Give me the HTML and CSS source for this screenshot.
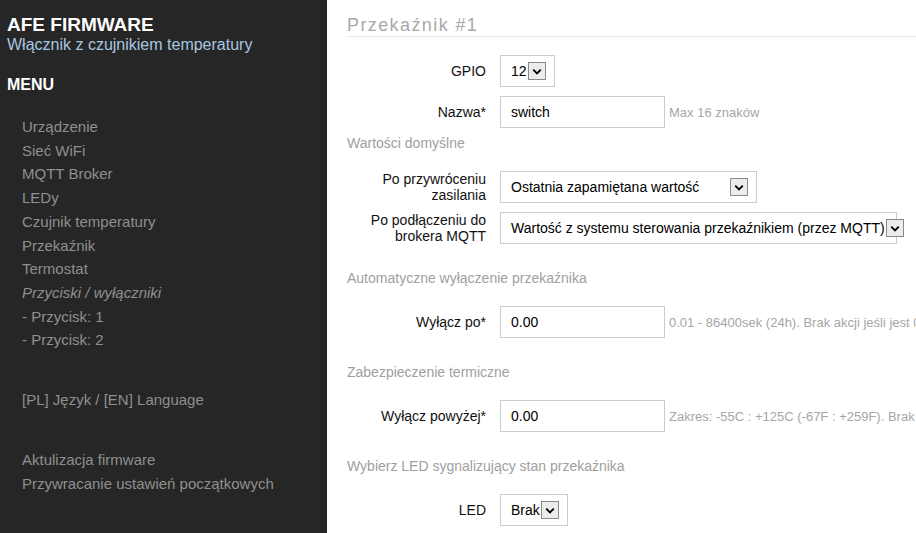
FILE: index.html
```html
<!DOCTYPE html>
<html lang="pl">
<head>
<meta charset="utf-8">
<title>AFE Firmware</title>
<link rel="stylesheet" href="styles.css">
</head>
<body>
<div class="layout">
  <nav class="sidebar">
    <div class="brand">AFE FIRMWARE</div>
    <div class="subtitle">Włącznik z czujnikiem temperatury</div>
    <div class="menu-title">MENU</div>
    <ul class="menu">
      <li>Urządzenie</li>
      <li>Sieć WiFi</li>
      <li>MQTT Broker</li>
      <li>LEDy</li>
      <li>Czujnik temperatury</li>
      <li>Przekaźnik</li>
      <li>Termostat</li>
      <li class="italic">Przyciski / wyłączniki</li>
      <li>- Przycisk: 1</li>
      <li>- Przycisk: 2</li>
      <li class="spaced">[PL] Język / [EN] Language</li>
      <li class="spaced">Aktulizacja firmware</li>
      <li>Przywracanie ustawień początkowych</li>
    </ul>
  </nav>
  <main class="content">
    <h2 class="heading">Przekaźnik #1</h2>
    <div class="row">
      <label class="lbl">GPIO</label>
      <div class="select w-gpio"><span>12</span><span class="arrow"><svg width="17" height="17" viewBox="0 0 17 17"><path d="M4.5 6.5 L8.5 10.5 L12.5 6.5" fill="none" stroke="#000" stroke-width="2"/></svg></span></div>
    </div>
    <div class="row">
      <label class="lbl">Nazwa*</label>
      <div class="input">switch</div>
      <span class="hint">Max 16 znaków</span>
    </div>
    <div class="legend first">Wartości domyślne</div>
    <div class="row">
      <label class="lbl">Po przywróceniu zasilania</label>
      <div class="select w-power"><span>Ostatnia zapamiętana wartość</span><span class="arrow"><svg width="17" height="17" viewBox="0 0 17 17"><path d="M4.5 6.5 L8.5 10.5 L12.5 6.5" fill="none" stroke="#000" stroke-width="2"/></svg></span></div>
    </div>
    <div class="row">
      <label class="lbl">Po podłączeniu do brokera MQTT</label>
      <div class="select w-mqtt"><span>Wartość z systemu sterowania przekaźnikiem (przez MQTT)</span><span class="arrow"><svg width="17" height="17" viewBox="0 0 17 17"><path d="M4.5 6.5 L8.5 10.5 L12.5 6.5" fill="none" stroke="#000" stroke-width="2"/></svg></span></div>
    </div>
    <div class="legend">Automatyczne wyłączenie przekaźnika</div>
    <div class="row">
      <label class="lbl">Wyłącz po*</label>
      <div class="input">0.00</div>
      <span class="hint">0.01 - 86400sek (24h). Brak akcji jeśli jest 0</span>
    </div>
    <div class="legend">Zabezpieczenie termiczne</div>
    <div class="row">
      <label class="lbl">Wyłącz powyżej*</label>
      <div class="input">0.00</div>
      <span class="hint">Zakres: -55C : +125C (-67F : +259F). Brak akcji jeśli jest 0</span>
    </div>
    <div class="legend">Wybierz LED sygnalizujący stan przekaźnika</div>
    <div class="row">
      <label class="lbl">LED</label>
      <div class="select w-led"><span>Brak</span><span class="arrow"><svg width="17" height="17" viewBox="0 0 17 17"><path d="M4.5 6.5 L8.5 10.5 L12.5 6.5" fill="none" stroke="#000" stroke-width="2"/></svg></span></div>
    </div>
  </main>
</div>
</body>
</html>
```

FILE: styles.css
```css
html, body {
  margin: 0;
  padding: 0;
  height: 100%;
  overflow: hidden;
  background: #fff;
  font-family: "Liberation Sans", Arial, sans-serif;
}

.layout {
  display: flex;
  height: 100vh;
}

.sidebar {
  width: 327px;
  flex: 0 0 327px;
  background: #262626;
  box-sizing: border-box;
  padding-left: 7px;
}

.brand {
  margin-top: 15px;
  font-size: 19px;
  line-height: 20px;
  font-weight: bold;
  color: #fff;
}

.subtitle {
  font-size: 16px;
  line-height: 20px;
  color: #a6c6e0;
}

.menu-title {
  margin-top: 20px;
  font-size: 16px;
  line-height: 20px;
  font-weight: bold;
  color: #fff;
}

.menu {
  list-style: none;
  margin: 20px 0 0;
  padding: 0 0 0 15px;
}

.menu li {
  font-size: 15px;
  line-height: 23.7px;
  color: #8f8f8f;
  white-space: nowrap;
}

.menu li.italic {
  font-style: italic;
}

.menu li.spaced {
  margin-top: 36.3px;
}

.content {
  flex: 1;
  min-width: 0;
  overflow: hidden;
  padding-left: 20px;
}

.heading {
  margin: 14px 0 18px;
  font-size: 18px;
  line-height: 22px;
  font-weight: normal;
  letter-spacing: 1.4px;
  color: #a9a9a9;
  border-bottom: 1px solid #e5e5e5;
}

.row {
  display: flex;
  align-items: center;
  height: 32px;
  margin-bottom: 9px;
  white-space: nowrap;
}

.lbl {
  flex: 0 0 139px;
  margin-right: 14px;
  text-align: right;
  font-size: 14px;
  line-height: 16px;
  color: #111;
  white-space: normal;
}

.input,
.select {
  box-sizing: border-box;
  height: 32px;
  border: 1px solid #ccc;
  font-size: 14px;
  color: #000;
  display: flex;
  align-items: center;
  padding-left: 10px;
  flex: 0 0 auto;
}

.input {
  width: 165px;
}

.select {
  justify-content: space-between;
  padding-right: 8px;
}

.select .arrow {
  box-sizing: border-box;
  width: 18px;
  height: 18px;
  border: 1px solid #8a8a8a;
  background: #ececec;
  display: flex;
  align-items: center;
  justify-content: center;
  margin-left: 1px;
}

.select .arrow svg {
  display: block;
}

.w-gpio { width: 55px; }
.w-power { width: 257px; }
.w-mqtt { width: 397px; }
.w-led { width: 68px; }

.hint {
  margin-left: 4px;
  font-size: 13px;
  color: #a6a6a6;
}

.legend {
  margin: 24px 0 18px;
  font-size: 14px;
  line-height: 20px;
  color: #a0a0a0;
}

.legend.first {
  margin-top: -4px;
}
```
